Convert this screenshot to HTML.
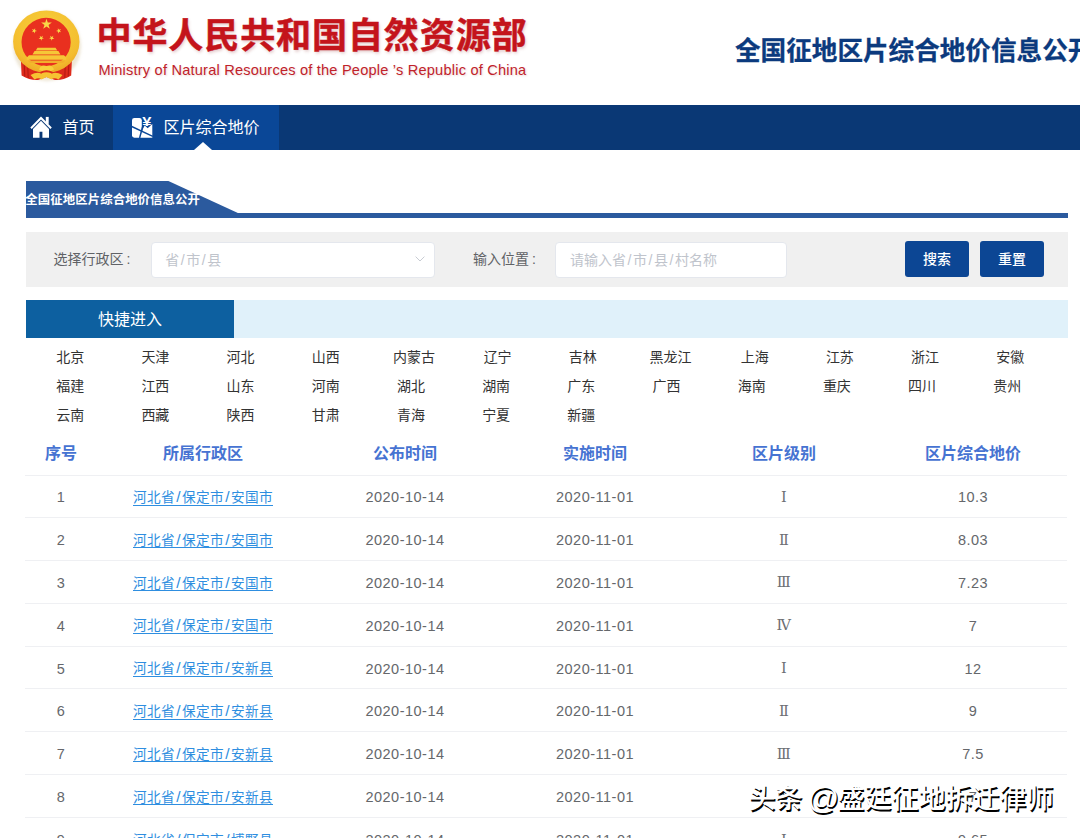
<!DOCTYPE html>
<html lang="zh-CN">
<head>
<meta charset="utf-8">
<title>全国征地区片综合地价信息公开</title>
<style>
*{box-sizing:border-box;margin:0;padding:0}
html,body{width:1080px;height:838px;overflow:hidden;background:#fff}
body{position:relative;font-family:"Liberation Sans","Noto Sans CJK SC",sans-serif;color:#333}
.abs{position:absolute}
/* header */
#emblem{left:0;top:0}
#title{left:96.5px;top:11px;font-size:35px;line-height:50px;font-weight:700;color:#c4141b;white-space:nowrap;letter-spacing:0.92px;-webkit-text-stroke:0.5px #c4141b;text-shadow:1px 2px 3px rgba(150,60,60,.25)}
#subtitle{left:98.5px;top:59.7px;font-size:14.6px;line-height:20px;color:#c0222a;white-space:nowrap;letter-spacing:0.2px;text-shadow:1px 1px 2px rgba(150,60,60,.2)}
#rtitle{left:735px;top:33px;font-size:25.6px;line-height:36px;font-weight:700;color:#0b3a7e;white-space:nowrap;-webkit-text-stroke:0.3px #0b3a7e}
/* nav */
#nav{left:0;top:105px;width:1080px;height:44.5px;background:#0a3875}
#nav .act{left:113px;top:0;width:166px;height:44.5px;background:#0a4797}
#nav .t{color:#fff;font-size:16px;line-height:44px;white-space:nowrap;top:1.3px;margin-left:-0.6px}
#nav .tri{left:194.3px;top:36.5px;width:0;height:0;border-left:9px solid transparent;border-right:9px solid transparent;border-bottom:8px solid #fff}
/* section title */
#sect{left:26px;top:181px;width:1041.5px;height:37px}
#sect .line{left:0;top:32px;width:1041.5px;height:5px;background:#2b5a9e}
#sect .lbl{left:-0.8px;top:8.5px;color:#fff;font-size:12.4px;font-weight:700;line-height:20px;white-space:nowrap;letter-spacing:0.1px}
/* filter */
#filter{left:26px;top:231.7px;width:1041.5px;height:55px;background:#f0f0f0}
#filter .lab{font-size:14px;color:#606266;line-height:54px;top:0;white-space:nowrap}
#filter .inp{top:10px;height:36px;background:#fff;border:1px solid #e4e7ed;border-radius:4px;font-size:14px;color:#c0c4cc;line-height:34px;padding-left:14px;white-space:nowrap}
#filter .btn{top:9.3px;height:35.6px;width:64px;background:#0c4694;border-radius:3px;color:#fff;font-size:14px;font-weight:500;line-height:36px;text-align:center}
/* quick */
#quick{left:26px;top:300px;width:1041.5px;height:38px;background:#e0f1fa}
#quick .q{left:0;top:0;width:208px;height:38px;background:#0d60a0;color:#fff;font-size:16px;line-height:39.5px;text-align:center}
#prov{left:27.6px;top:343.2px;width:1030px;display:flex;flex-wrap:wrap}
#prov span{width:85.2px;height:28.7px;line-height:28.7px;text-align:center;font-size:14px;color:#333;white-space:nowrap}
#prov span.w{padding-left:6.2px;margin-right:1.5px}
#prov span.w2{padding-left:4.8px}
/* table */
#tbl{left:25px;top:432px;width:1042px;border-collapse:collapse;table-layout:fixed}
#tbl th{height:43px;padding-bottom:2px;font-size:16px;font-weight:700;color:#4673d2;text-align:center;vertical-align:middle}
#tbl td{height:42.8px;padding-top:2px;font-size:14.5px;letter-spacing:0.5px;color:#65676b;text-align:center;vertical-align:middle;border-top:1px solid #eff0f3;white-space:nowrap}
#tbl td a{color:#2e8ee0;font-size:13.6px;letter-spacing:0.4px;display:inline-block;line-height:13.6px;border-bottom:1px solid #2e8ee0;position:relative;top:-0.1px}
#tbl td a i.s{font-size:15.5px;line-height:10px;letter-spacing:0}
i.c{font-style:normal;display:inline-block;width:7px;text-align:right}
i.s{font-style:normal;display:inline-block;width:7px;text-align:center}
#tbl td.r{font-family:"DejaVu Serif","Liberation Serif",serif;font-size:14.5px;letter-spacing:0.3px;padding-top:1px;color:#6d6f73}
/* watermark */
#wm{left:748.5px;top:783px;font-size:27px;line-height:32px;font-weight:500;color:#fff;white-space:nowrap;text-shadow:1.3px 2px 0.3px #000}
#wm b{font-weight:500;font-size:31.5px;line-height:0;margin:0 -1.8px 0 -2.8px;position:relative;top:1px}
</style>
</head>
<body>
<!-- HEADER -->
<svg id="emblem" class="abs" width="100" height="100" viewBox="0 0 100 100">
<defs>
<radialGradient id="gR" cx="50%" cy="35%" r="70%"><stop offset="0" stop-color="#f7d23e"/><stop offset="0.75" stop-color="#f4bd2e"/><stop offset="1" stop-color="#eba324"/></radialGradient>
<filter id="sh" x="-20%" y="-20%" width="140%" height="140%"><feGaussianBlur stdDeviation="1.8"/></filter>
</defs>
<ellipse cx="47" cy="46" rx="34" ry="35" fill="#dccdaa" opacity=".5" filter="url(#sh)"/>
<path d="M20.8 58 L21.6 75.5 Q30 80.5 38 80 L46.5 77 L55 80 Q63 80.5 71.2 75.5 L72 58 Z" fill="#de2a1b"/>
<path d="M24.2 64 L24.8 76.5 M27.8 66 L28.2 78 M65.2 66 L64.8 78 M68.8 64 L68.2 76.5" stroke="#b51a12" stroke-width="1.1" fill="none"/>
<ellipse cx="46.3" cy="41.7" rx="33.2" ry="31.2" fill="url(#gR)"/>
<ellipse cx="46.1" cy="42" rx="24.6" ry="24.2" fill="#e9301f"/>
<polygon points="46.50,18.70 47.76,22.57 51.83,22.57 48.53,24.96 49.79,28.83 46.50,26.44 43.21,28.83 44.47,24.96 41.17,22.57 45.24,22.57" fill="#f9d848"/><polygon points="35.16,28.17 35.09,30.20 37.00,30.90 35.04,31.46 34.97,33.49 33.83,31.81 31.88,32.37 33.13,30.76 31.99,29.08 33.91,29.77" fill="#f9d848"/><polygon points="57.84,28.17 59.09,29.77 61.01,29.08 59.87,30.76 61.12,32.37 59.17,31.81 58.03,33.49 57.96,31.46 56.00,30.90 57.91,30.20" fill="#f9d848"/><polygon points="42.91,35.71 42.31,37.65 43.98,38.82 41.94,38.85 41.35,40.80 40.69,38.88 38.65,38.91 40.28,37.69 39.61,35.76 41.28,36.93" fill="#f9d848"/><polygon points="50.09,35.71 51.72,36.93 53.39,35.76 52.72,37.69 54.35,38.91 52.31,38.88 51.65,40.80 51.06,38.85 49.02,38.82 50.69,37.65" fill="#f9d848"/>
<path d="M37.5 47.8 H55.5 L57.3 50.4 H35.7 Z M34.6 51 H58.4 L60.5 54.4 H32.5 Z M29 55.2 H64 L66.2 57.4 V59.8 H26.8 V57.4 Z" fill="#f6c737"/>
<path d="M27.5 60.6 H65.5 L63 63 H30 Z" fill="#f2ae2b"/>
<path d="M30.5 75 Q37 71.5 41 73.5 L46.5 71 L52 73.5 Q56 71.5 62.5 75 L58.5 79.6 Q54 77 51.5 79.6 L46.5 77 L41.5 79.6 Q39 77 34.5 79.6 Z" fill="#f6c232"/>
<path d="M39 69.5 Q41 64 46.5 66 Q52 64 54 69.5 Q50 72.5 46.5 70 Q43 72.5 39 69.5 Z" fill="#f8cf3c"/>
<path d="M40 72 Q46.5 68.5 53 72 L52 73.6 Q46.5 70.8 41 73.6 Z" fill="#de2a1b"/>
</svg>
<div id="title" class="abs">中华人民共和国自然资源部</div>
<div id="subtitle" class="abs">Ministry of Natural Resources of the People ’s Republic of China</div>
<div id="rtitle" class="abs">全国征地区片综合地价信息公开</div>
<!-- NAV -->
<div id="nav" class="abs">
  <div class="act abs"></div>
  <svg class="abs" style="left:30px;top:11px" width="23" height="23" viewBox="0 0 23 23"><path d="M0.3 11.6 L11 0.6 L21.8 11.6 L20.4 13 L11 3.4 L1.7 13 Z" fill="#fff"/><rect x="15.8" y="0.9" width="2.9" height="7" fill="#fff"/><path d="M3 12.9 L11 4.7 L19 12.9 V21.8 H12.4 V15.7 H9.5 V21.8 H3 Z" fill="#fff"/></svg>
  <svg class="abs" style="left:131.5px;top:11.3px" width="21" height="23" viewBox="0 0 21 23"><rect x="0" y="1.9" width="9.8" height="19.8" rx="2.4" fill="#fff"/><path d="M8 21.7 L10.6 13.4 L12.7 9.4 L15.7 12.3 L20.3 7.9 V21.7 Z" fill="#fff"/><path d="M-0.5 10.4 L20.8 20.4" stroke="#0a4797" stroke-width="1.4"/><path d="M11.6 7 L7.6 22" stroke="#0a4797" stroke-width="1.4"/><text transform="translate(14.9 9.7) scale(1.22 1)" x="0" y="0" text-anchor="middle" font-family="Liberation Sans,sans-serif" font-weight="700" font-size="13.5" fill="#fff">¥</text></svg>
  <div class="t abs" style="left:63px">首页</div>
  <div class="t abs" style="left:164px">区片综合地价</div>
  <div class="tri abs"></div>
</div>
<!-- SECTION -->
<div id="sect" class="abs">
  <svg class="abs" style="left:0;top:0" width="220" height="33" viewBox="0 0 220 33"><path d="M0 0H142.4L213 32.5H0Z" fill="#2b5a9e"/></svg>
  <div class="line abs"></div>
  <div class="lbl abs">全国征地区片综合地价信息公开</div>
</div>
<!-- FILTER -->
<div id="filter" class="abs">
  <div class="lab abs" style="left:27.5px">选择行政区<i class="c">:</i></div>
  <div class="inp abs" style="left:124.8px;width:284.4px;padding-left:13.5px">省<i class="s">/</i>市<i class="s">/</i>县</div>
  <svg class="abs" style="left:388.6px;top:24.6px" width="10" height="6" viewBox="0 0 10 6"><path d="M0.6 0.6 L5 5 L9.4 0.6" fill="none" stroke="#c8ccd3" stroke-width="1"/></svg>
  <div class="lab abs" style="left:447px">输入位置<i class="c">:</i></div>
  <div class="inp abs" style="left:529px;width:232px">请输入省<i class="s">/</i>市<i class="s">/</i>县<i class="s">/</i>村名称</div>
  <div class="btn abs" style="left:879px">搜索</div>
  <div class="btn abs" style="left:954px">重置</div>
</div>
<!-- QUICK -->
<div id="quick" class="abs"><div class="q abs">快捷进入</div></div>
<div id="prov" class="abs">
<span>北京</span><span>天津</span><span>河北</span><span>山西</span><span class="w">内蒙古</span><span>辽宁</span><span>吉林</span><span class="w w2">黑龙江</span><span>上海</span><span>江苏</span><span>浙江</span><span>安徽</span>
<span>福建</span><span>江西</span><span>山东</span><span>河南</span><span>湖北</span><span>湖南</span><span>广东</span><span>广西</span><span>海南</span><span>重庆</span><span>四川</span><span>贵州</span>
<span>云南</span><span>西藏</span><span>陕西</span><span>甘肃</span><span>青海</span><span>宁夏</span><span>新疆</span>
</div>
<!-- TABLE -->
<table id="tbl" class="abs">
<colgroup><col style="width:72px"><col style="width:212px"><col style="width:192px"><col style="width:188px"><col style="width:190px"><col style="width:188px"></colgroup>
<tr><th>序号</th><th>所属行政区</th><th>公布时间</th><th>实施时间</th><th>区片级别</th><th>区片综合地价</th></tr>
<tr><td>1</td><td><a>河北省<i class="s">/</i>保定市<i class="s">/</i>安国市</a></td><td>2020-10-14</td><td>2020-11-01</td><td class="r">Ⅰ</td><td>10.3</td></tr>
<tr><td>2</td><td><a>河北省<i class="s">/</i>保定市<i class="s">/</i>安国市</a></td><td>2020-10-14</td><td>2020-11-01</td><td class="r">Ⅱ</td><td>8.03</td></tr>
<tr><td>3</td><td><a>河北省<i class="s">/</i>保定市<i class="s">/</i>安国市</a></td><td>2020-10-14</td><td>2020-11-01</td><td class="r">Ⅲ</td><td>7.23</td></tr>
<tr><td>4</td><td><a>河北省<i class="s">/</i>保定市<i class="s">/</i>安国市</a></td><td>2020-10-14</td><td>2020-11-01</td><td class="r">Ⅳ</td><td>7</td></tr>
<tr><td>5</td><td><a>河北省<i class="s">/</i>保定市<i class="s">/</i>安新县</a></td><td>2020-10-14</td><td>2020-11-01</td><td class="r">Ⅰ</td><td>12</td></tr>
<tr><td>6</td><td><a>河北省<i class="s">/</i>保定市<i class="s">/</i>安新县</a></td><td>2020-10-14</td><td>2020-11-01</td><td class="r">Ⅱ</td><td>9</td></tr>
<tr><td>7</td><td><a>河北省<i class="s">/</i>保定市<i class="s">/</i>安新县</a></td><td>2020-10-14</td><td>2020-11-01</td><td class="r">Ⅲ</td><td>7.5</td></tr>
<tr><td>8</td><td><a>河北省<i class="s">/</i>保定市<i class="s">/</i>安新县</a></td><td>2020-10-14</td><td>2020-11-01</td><td class="r">Ⅳ</td><td>7</td></tr>
<tr><td>9</td><td><a>河北省<i class="s">/</i>保定市<i class="s">/</i>博野县</a></td><td>2020-10-14</td><td>2020-11-01</td><td class="r">Ⅰ</td><td>9.65</td></tr>
</table>
<!-- WATERMARK -->
<div id="wm" class="abs">头条 <b>@</b>盛廷征地拆迁律师</div>
</body>
</html>
